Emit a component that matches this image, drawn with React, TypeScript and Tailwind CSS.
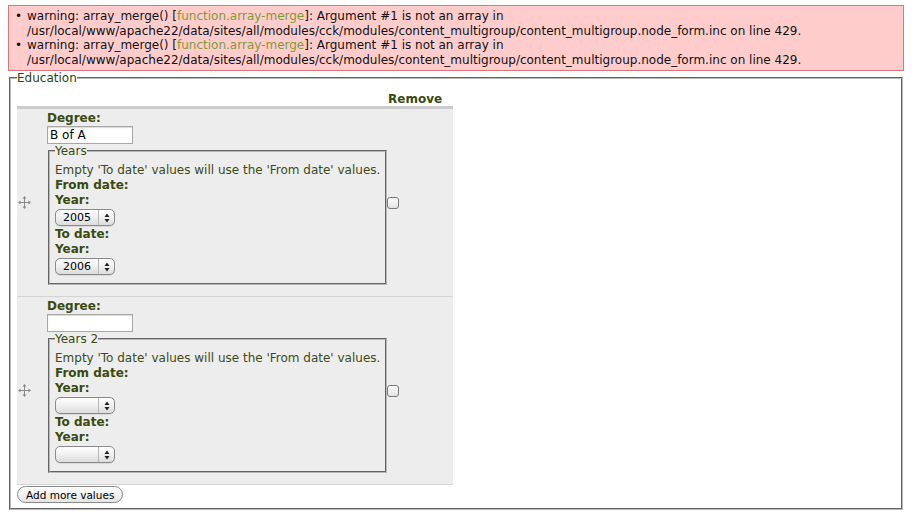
import React from "react";

const font = { fontFamily: '"DejaVu Sans", Verdana, sans-serif' };

function DragHandle() {
  return (
    <svg width="13" height="13" viewBox="0 0 13 13" className="block">
      <g fill="#8a8a8a">
        <rect x="6" y="2" width="1" height="9" />
        <rect x="2" y="6" width="9" height="1" />
        <polygon points="6.5,0 4.5,2.5 8.5,2.5" />
        <polygon points="6.5,13 4.5,10.5 8.5,10.5" />
        <polygon points="0,6.5 2.5,4.5 2.5,8.5" />
        <polygon points="13,6.5 10.5,4.5 10.5,8.5" />
      </g>
    </svg>
  );
}

function Select({ value }: { value?: string }) {
  return (
    <div className="flex h-[17px] w-[60px] items-stretch rounded-[5px] border border-[#8a8a8a] bg-gradient-to-b from-[#ffffff] via-[#f0f0f0] to-[#dcdcdc] text-[11px] leading-[15px] text-black shadow-[0_1px_0_rgba(0,0,0,0.08)]">
      <div className="flex-1 pl-[7px]">{value ?? ""}</div>
      <div className="flex w-[16px] flex-col items-center justify-center border-l border-[#b8b8b8]">
        <svg width="6" height="10" viewBox="0 0 6 10">
          <polygon points="3,0.5 0.5,4 5.5,4" fill="#222" />
          <polygon points="3,9.5 0.5,6 5.5,6" fill="#222" />
        </svg>
      </div>
    </div>
  );
}

function Checkbox() {
  return (
    <div className="h-[12px] w-[12px] rounded-[3px] border border-[#7a7a7a] bg-gradient-to-b from-[#ffffff] to-[#e2e2e2]" />
  );
}

function Row({ degree, legend, from, to }: { degree: string; legend: string; from?: string; to?: string }) {
  return (
    <div className="flex border-b border-[#d4d4d4] bg-[#ededed]">
      <div className="flex w-[24px] items-center justify-start pl-[1px]">
        <DragHandle />
      </div>
      <div className="flex w-[346px] flex-col pb-[11px] pl-[6px] pt-[2px]">
        <div className="text-[12px] font-bold leading-[14px] text-[#3a4a10]">Degree:</div>
        <div className="mt-[1px] h-[18px] w-[86px] border border-[#a8a8a8] bg-white pl-[2px] text-[12px] leading-[16px] text-black shadow-[inset_0_1px_1px_rgba(0,0,0,0.15)]">
          {degree}
        </div>
        <fieldset className="ml-px w-[339px] border-2 border-[#b8b8b8] px-[5px] pb-[8px] pt-[5px] [border-style:groove]">
          <legend className="px-0 text-[12px] leading-[14px] text-[#3a4a10]">{legend}</legend>
          <div className="whitespace-nowrap text-[12px] leading-[15px] text-[#3d4a18]">Empty 'To date' values will use the 'From date' values.</div>
          <div className="text-[12px] font-bold leading-[15px] text-[#3a4a10]">From date:</div>
          <div className="text-[12px] font-bold leading-[15px] text-[#3a4a10]">Year:</div>
          <div className="mt-[1px]">
            <Select value={from} />
          </div>
          <div className="mt-[1px] text-[12px] font-bold leading-[15px] text-[#3a4a10]">To date:</div>
          <div className="text-[12px] font-bold leading-[15px] text-[#3a4a10]">Year:</div>
          <div className="mt-[1px]">
            <Select value={to} />
          </div>
        </fieldset>
      </div>
      <div className="flex flex-1 items-center pl-0">
        <Checkbox />
      </div>
    </div>
  );
}

export default function App() {
  const msg = (
    <>
      warning: array_merge() [<span className="text-[#7f9a3a]">function.array-merge</span>]: Argument #1 is not an array in
      <br />
      /usr/local/www/apache22/data/sites/all/modules/cck/modules/content_multigroup/content_multigroup.node_form.inc on line 429.
    </>
  );
  return (
    <div className="min-h-[517px] w-[912px] bg-white" style={font}>
      <div className="px-[8px] pt-[5px]">
        <div className="border border-[#dd7777] bg-[#ffcccc] py-[3px] pl-[6px] text-[12px] leading-[14.5px] text-[#111]">
          <ul className="m-0 p-0">
            <li className="flex">
              <span className="w-[12px] shrink-0 text-[12px]">•</span>
              <span>{msg}</span>
            </li>
            <li className="flex">
              <span className="w-[12px] shrink-0 text-[12px]">•</span>
              <span>{msg}</span>
            </li>
          </ul>
        </div>
        <fieldset className="mx-px border-2 border-[#b8b8b8] pb-[5px] pl-[6px] pr-[6px] [border-style:groove]">
          <legend className="px-0 text-[12px] leading-[14px] text-[#2f3f10]">Education</legend>
          <div className="w-[436px]">
            <div className="flex h-[24px] items-end border-b-[3px] border-[#cccccc]">
              <div className="w-[370px]" />
              <div className="pl-[1px] text-[12px] font-bold leading-[14px] text-[#3a4a10]">Remove</div>
            </div>
            <Row degree="B of A" legend="Years" from="2005" to="2006" />
            <Row degree="" legend="Years 2" />
            <div className="flex pt-[1px]">
              <button className="block h-[17px] rounded-[9px] border border-[#8a8a8a] bg-gradient-to-b from-[#ffffff] to-[#e4e4e4] px-[8px] text-[10.5px] leading-[14px] text-black">
                Add more values
              </button>
            </div>
          </div>
        </fieldset>
      </div>
    </div>
  );
}
